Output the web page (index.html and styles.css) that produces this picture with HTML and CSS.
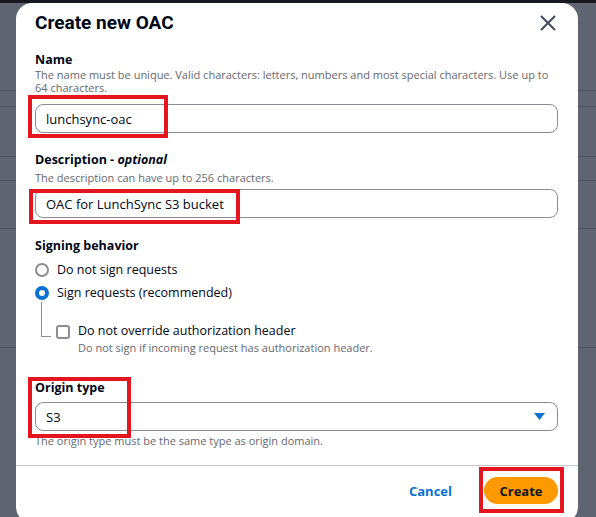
FILE: index.html
```html
<!DOCTYPE html>
<html lang="en">
<head>
<meta charset="utf-8">
<title>Create new OAC</title>
<link rel="stylesheet" href="styles.css">
</head>
<body>
<div class="topbar"></div>
<div class="modal">
  <header class="modal-header">
    <h2 class="title">Create new OAC</h2>
    <button class="close" aria-label="Close">
      <svg width="16" height="16" viewBox="0 0 16 16"><path d="M1 1 L15 15 M15 1 L1 15" stroke="#414d5c" stroke-width="2" fill="none"/></svg>
    </button>
  </header>

  <div class="body">
    <div class="field f-name">
      <div class="label">Name</div>
      <div class="caption">The name must be unique. Valid characters: letters, numbers and most special characters. Use up to 64 characters.</div>
      <div class="input">lunchsync-oac</div>
    </div>

    <div class="field f-desc">
      <div class="label">Description - <i>optional</i></div>
      <div class="caption">The description can have up to 256 characters.</div>
      <div class="input">OAC for LunchSync S3 bucket</div>
    </div>

    <div class="field f-sign">
      <div class="label">Signing behavior</div>
      <div class="radio"><span class="dot"></span><span>Do not sign requests</span></div>
      <div class="radio"><span class="dot on"></span><span>Sign requests (recommended)</span></div>
      <div class="sub">
        <span class="tree"></span>
        <span class="check"></span>
        <div class="sub-text">
          <div class="sub-label">Do not override authorization header</div>
          <div class="caption small">Do not sign if incoming request has authorization header.</div>
        </div>
      </div>
    </div>

    <div class="field f-origin">
      <div class="label">Origin type</div>
      <div class="input select"><span>S3</span>
        <svg width="11" height="7" viewBox="0 0 11 7"><path d="M0 0 H11 L5.5 7 Z" fill="#0972d3"/></svg>
      </div>
      <div class="caption">The origin type must be the same type as origin domain.</div>
    </div>
  </div>

  <footer class="footer">
    <button class="btn-link">Cancel</button>
    <button class="btn-primary">Create</button>
  </footer>

  <div class="hl hl-name"></div>
  <div class="hl hl-desc"></div>
  <div class="hl hl-origin"></div>
  <div class="hl hl-create"></div>
</div>
</body>
</html>
```

FILE: styles.css
```css
* { box-sizing: border-box; }
html, body { margin: 0; padding: 0; }
body {
  width: 596px;
  height: 517px;
  overflow: hidden;
  font-family: "Open Sans", "Noto Sans", sans-serif;
  color: #000716;
  background-color: #5f6470;
  background-image:
    linear-gradient(to bottom,
      transparent 90px, #4b505b 90px, #4b505b 91px, transparent 91px,
      transparent 106px, #4b505b 106px, #4b505b 107px, transparent 107px,
      transparent 156px, #4b505b 156px, #4b505b 157px, transparent 157px,
      transparent 180px, #4b505b 180px, #4b505b 181px, transparent 181px,
      transparent 228px, #4b505b 228px, #4b505b 229px, transparent 229px,
      transparent 347px, #4b505b 347px, #4b505b 348px, transparent 348px);
}
.topbar { height: 3px; background: #16191f; }

.modal {
  position: relative;
  margin-left: 16px;
  width: 562px;
  height: 520px;
  background: #fff;
  border-radius: 16px;
  display: flex;
  flex-direction: column;
}

.modal-header {
  display: flex;
  align-items: flex-start;
  justify-content: space-between;
  padding: 7px 22px 0 19px;
  height: 44px;
  flex: none;
}
.title {
  margin: 0;
  font-family: Roboto, "Open Sans", sans-serif;
  font-size: 19px;
  line-height: 26px;
  font-weight: 700;
}
.close {
  border: 0;
  background: none;
  padding: 0;
  margin-top: 5px;
  width: 16px;
  height: 16px;
  display: flex;
}

.body { padding: 0 20px 0 19px; }

.label {
  font-size: 12.5px;
  line-height: 16px;
  font-weight: 700;
}
.label i { font-weight: 700; }
.caption {
  font-size: 11px;
  line-height: 13px;
  color: #656871;
}
.input {
  height: 29px;
  border: 1px solid #8c8c94;
  border-radius: 8px;
  padding: 0 10px;
  display: flex;
  align-items: center;
  font-size: 13px;
  color: #000716;
}

.f-name { padding-top: 5px; }
.f-name .input { margin-top: 10px; }
.f-desc { margin-top: 19px; }
.f-desc .caption { margin-top: 3px; }
.f-desc .input { margin-top: 5px; }

.f-sign { margin-top: 20px; }
.f-sign .label { margin-bottom: 4px; }
.radio {
  display: flex;
  align-items: center;
  gap: 8px;
  height: 23px;
  font-size: 12.5px;
}
.dot {
  width: 14px;
  height: 14px;
  border-radius: 50%;
  border: 2px solid #8c8c94;
  flex: none;
}
.dot.on { border: 4px solid #0972d3; }
.sub {
  display: flex;
  align-items: flex-start;
  height: 51px;
}
.tree {
  width: 10px;
  height: 35px;
  margin-top: -2px;
  margin-left: 6px;
  border-left: 1px solid #8c8c94;
  border-bottom: 1px solid #8c8c94;
  flex: none;
}
.check {
  width: 14px;
  height: 14px;
  border: 2px solid #8c8c94;
  border-radius: 3px;
  margin-left: 5px;
  margin-top: 21px;
  flex: none;
}
.sub-text { margin-left: 8px; margin-top: 18px; }
.sub-label { font-size: 12.5px; line-height: 18px; }
.caption.small { font-size: 11px; line-height: 14px; margin-top: 1px; }

.f-origin { margin-top: 25px; }
.f-origin .input { margin-top: 6px; }
.select { justify-content: space-between; padding-right: 12px; }
.f-origin .caption { margin-top: 3px; }

.footer {
  position: absolute;
  left: 0;
  right: 0;
  top: 462px;
  border-top: 1px solid #c6c6cd;
  display: flex;
  justify-content: flex-end;
  align-items: center;
  gap: 32px;
  padding: 11px 20px 0 0;
}
.btn-link {
  border: 0;
  background: none;
  font-family: inherit;
  font-size: 13px;
  font-weight: 700;
  color: #0972d3;
  padding: 0;
}
.btn-primary {
  border: 0;
  background: #ff9900;
  color: #0f141a;
  font-family: inherit;
  font-size: 13px;
  font-weight: 700;
  width: 74px;
  height: 27px;
  border-radius: 14px;
  padding: 0;
}

.hl {
  position: absolute;
  border: 4px solid #e3161f;
  pointer-events: none;
}
.hl-name { left: 12px; top: 92px; width: 140px; height: 43px; }
.hl-desc { left: 13px; top: 186px; width: 211px; height: 35px; }
.hl-origin { left: 12px; top: 374px; width: 103px; height: 61px; }
.hl-create { left: 463px; top: 464px; width: 85px; height: 46px; }
```
